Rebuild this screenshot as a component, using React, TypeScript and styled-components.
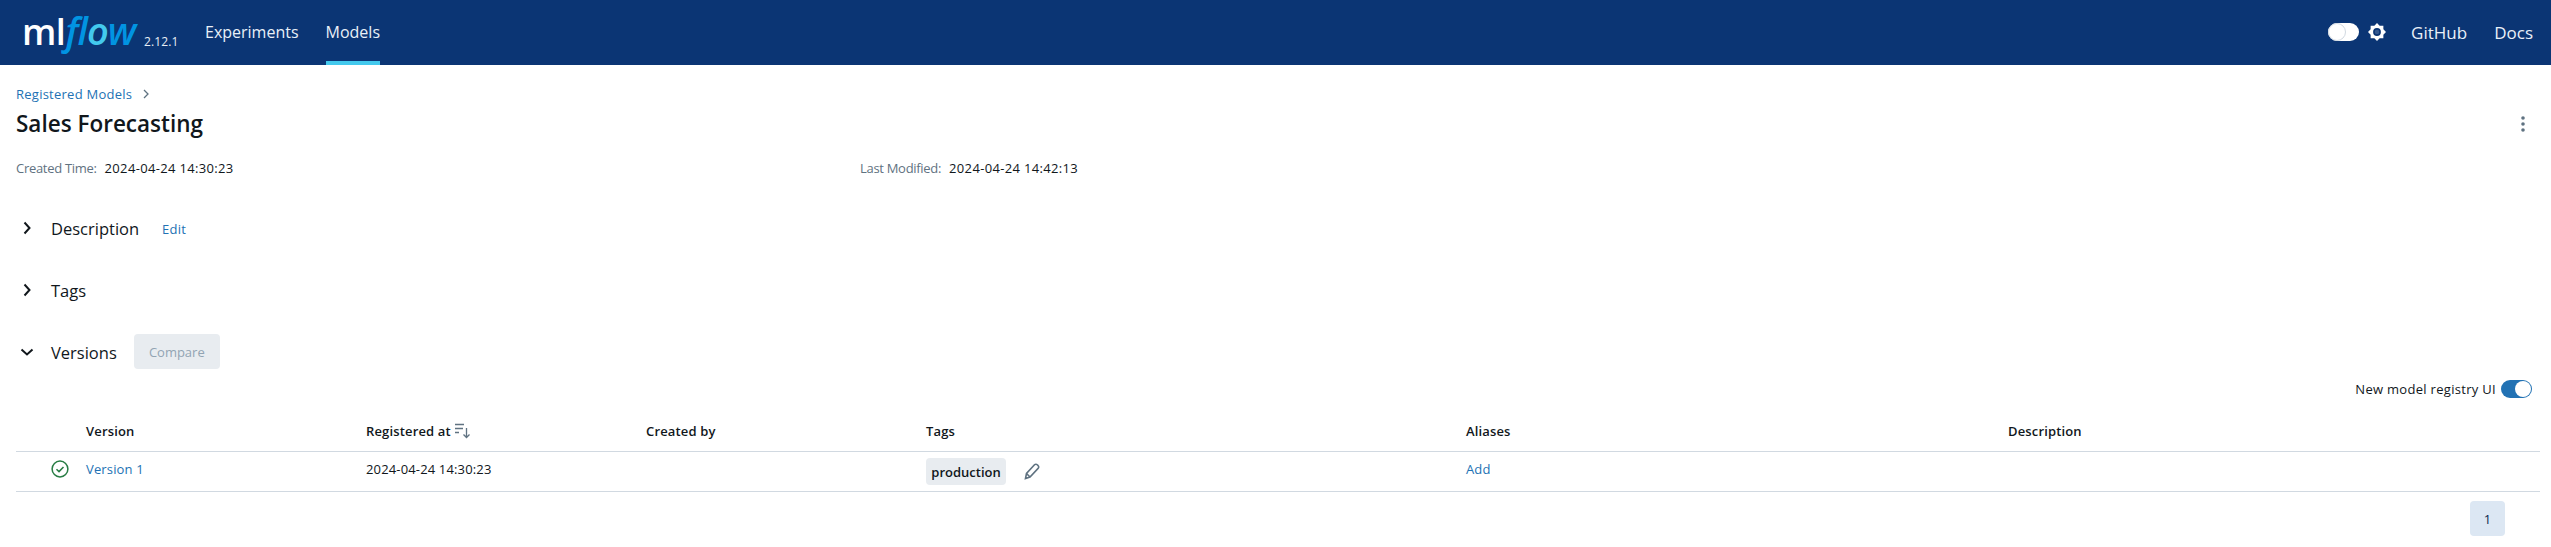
import React from "react";
import styled, { createGlobalStyle } from "styled-components";

const Global = createGlobalStyle`
  html, body { margin: 0; padding: 0; background: #fff; overflow: hidden; }
  body { font-family: "Open Sans", "Noto Sans", sans-serif; color: #11171c; }
  * { box-sizing: border-box; }
`;

const Page = styled.div`width: 2551px; height: 547px; overflow: hidden;`;
const Header = styled.header`
  height: 65px; background: #0b3574; display: flex; align-items: stretch; padding: 0 18px 0 22px;
`;
const Logo = styled.div`
  width: 122px; height: 65px; display: flex; align-items: baseline; padding-top: 4px; line-height: 52px;
`;
const LogoMl = styled.span`font-size: 36px; font-weight: 600; color: #fff; letter-spacing: -0.5px;`;
const LogoFlow = styled.span`
  font-size: 38px; font-weight: 600; font-style: italic; color: #0194e2; letter-spacing: -1px;
`;
const LogoO = styled.span`color: #43c9ed;`;
const LogoVersion = styled.span`
  font-size: 12px; letter-spacing: 0.1px; color: #e8eef5; width: 36px; align-self: flex-start; padding-top: 33px; white-space: nowrap;
`;
const NavLink = styled.a<{ $active?: boolean }>`
  display: flex; align-items: center; height: 65px; padding-bottom: 1px; font-size: 16px; color: #e9f0f8;
  margin-left: ${(p) => (p.$active ? "27px" : "25px")};
  ${(p) => p.$active && `box-shadow: inset 0 -4px 0 #43c9ed;`}
`;
const Spacer = styled.div`flex: 1;`;
const ThemeToggle = styled.div`
  align-self: center; width: 31px; height: 18px; border-radius: 9px; background: #fff; display: flex; margin-top: -1px;
  justify-content: flex-start;
`;
const ThemeThumb = styled.div`
  width: 18px; height: 18px; border-radius: 50%; background: #fff; border: 1px solid #d1d9e1;
`;
const SunWrap = styled.div`align-self: center; display: flex; margin: -1px 0 0 9px;`;
const HeaderLink = styled.a<{ $gap: number }>`
  display: flex; align-items: center; font-size: 17px; color: #e9f0f8; margin-left: ${(p) => p.$gap}px; padding-bottom: 1px;
`;

const Content = styled.main`padding: 0 11px 0 16px;`;
const Breadcrumb = styled.div`
  display: flex; align-items: center; height: 18px; margin-top: 20px; font-size: 13px; letter-spacing: 0.25px; color: #2272b4;
`;
const Crumb = styled.span`margin-right: 10px;`;
const TitleRow = styled.div`display: flex; justify-content: space-between; align-items: center; height: 40px; margin-top: 1px;`;
const Title = styled.h1`margin: 0; font-size: 22.5px; font-weight: 600; color: #11171c; line-height: 40px;`;
const MoreBtn = styled.div`display: flex; margin-right: 13px;`;
const Meta = styled.div`display: flex; height: 20px; margin-top: 14px; align-items: center;`;
const MetaItem = styled.div`width: 844px; display: flex; font-size: 13px;`;
const MetaLabel = styled.span`color: #5f7281; letter-spacing: -0.3px; margin-right: 8px;`;
const MetaValue = styled.span`color: #11171c; letter-spacing: 0.33px;`;

const Section = styled.div<{ $top: number }>`
  display: flex; align-items: center; height: 36px; margin-top: ${(p) => p.$top}px;
`;
const ChevronBox = styled.div`width: 35px; display: flex; padding-left: 3px;`;
const SectionTitle = styled.span`font-size: 16.5px; color: #11171c;`;
const EditLink = styled.span`font-size: 13px; letter-spacing: 0.2px; color: #2272b4; margin-left: 23px; padding-top: 2px;`;
const CompareBtn = styled.button`
  height: 35px; width: 86px; margin-left: 17px; border: 0; border-radius: 4px; background: #e8ecf0; color: #92a4b3;
  font: 13px "Open Sans", sans-serif; margin-top: -1px; padding: 0;
`;
const ToggleRow = styled.div`
  display: flex; justify-content: flex-end; align-items: center; gap: 5px; height: 18px; margin-top: 10px; font-size: 13px; letter-spacing: 0.3px; color: #11171c;
  padding-right: 8px;
`;
const Switch = styled.div`
  width: 31px; height: 18px; border-radius: 9px; background: #2272b4; display: flex; justify-content: flex-end; align-items: center; padding-right: 1px;
`;
const Knob = styled.div`width: 16px; height: 16px; border-radius: 50%; background: #fff;`;

const Table = styled.div`margin-top: 7px;`;
const Row = styled.div<{ $h: number; $pad?: number }>`
  display: grid; grid-template-columns: 70px 280px 280px 280px 540px 542px 1fr; height: ${(p) => p.$h}px;
  padding-top: ${(p) => p.$pad ?? 0}px;
  border-bottom: 1px solid #d1d9e1; align-items: center; font-size: 13px; letter-spacing: 0.15px;
`;
const HeadCell = styled.div`font-weight: 600; color: #11171c; display: flex; align-items: center; gap: 4px;`;
const Cell = styled.div<{ $up?: number }>`display: flex; align-items: center; color: #11171c; margin-top: ${(p) => -(p.$up ?? 0)}px;`;
const StatusCell = styled.div`padding-left: 35px; display: flex; margin-top: -6px;`;
const LinkText = styled.span`color: #2272b4;`;
const Tag = styled.span`
  height: 27px; width: 80px; background: #e8ecf0; border-radius: 4px; display: flex; align-items: center; justify-content: center;
  font-size: 13px; letter-spacing: 0; font-weight: 600; color: #11171c; white-space: nowrap;
`;
const PencilWrap = styled.span`display: flex; margin-left: 18px;`;
const Pager = styled.div`display: flex; justify-content: flex-end; padding: 9px 35px 0 0;`;
const PageBtn = styled.div`
  width: 35px; height: 35px; background: #dce7f3; border-radius: 4px; display: flex; align-items: center; justify-content: center;
  font-size: 13px; color: #0e2a4d;
`;

const Chevron = ({ down }: { down?: boolean }) => (
  <svg width="16" height="16" viewBox="0 0 16 16" fill="none" stroke="#11171c" strokeWidth="2">
    {down ? <path d="M2.5 5.5 8 10.5l5.5-5" /> : <path d="M5.5 2.5 10.5 8l-5 5.5" />}
  </svg>
);

const sunPoints = Array.from({ length: 16 }, (_, i) => {
  const r = i % 2 === 0 ? 9 : 6.9;
  const a = (i * Math.PI) / 8 - Math.PI / 2;
  return `${(9 + r * Math.cos(a)).toFixed(2)},${(9 + r * Math.sin(a)).toFixed(2)}`;
}).join(" ");

const Sun = () => (
  <svg width="18" height="18" viewBox="0 0 18 18">
    <polygon fill="#fff" points={sunPoints} />
    <circle cx="9" cy="9" r="3.1" fill="#35598f" stroke="#0b3574" strokeWidth="1.6" />
  </svg>
);

const Dots = () => (
  <svg width="8" height="16" viewBox="0 0 8 16" fill="#5f7281">
    <circle cx="4" cy="2" r="1.8" />
    <circle cx="4" cy="8" r="1.8" />
    <circle cx="4" cy="14" r="1.8" />
  </svg>
);

const SortIcon = () => (
  <svg width="16" height="16" viewBox="0 0 16 16" fill="none" stroke="#5f7281" strokeWidth="1.3">
    <path d="M0 1.5h9M0 5.5h8M0 9.5h4" />
    <path d="M11.5 5v9.5M8.5 11.5l3 3 3-3" />
  </svg>
);

const CheckCircle = () => (
  <svg width="18" height="18" viewBox="0 0 18 18" fill="none" stroke="#277c43" strokeWidth="1.5">
    <circle cx="9" cy="9" r="7.9" />
    <path d="M5.5 9.3 8 11.6l4.5-4.6" />
  </svg>
);

const Pencil = () => (
  <svg width="16" height="17" viewBox="0 0 16 17" fill="none" stroke="#5f7281" strokeWidth="1.6">
    <path d="M1.5 15.5 2.5 10.5 10.5 1.8a1.9 1.9 0 0 1 2.8 0l.8.8a1.9 1.9 0 0 1 0 2.8L6 14z" />
    <path d="M2.5 10.5 6 14" />
  </svg>
);

export default function App() {
  return (
    <Page>
      <Global />
      <Header>
        <Logo>
          <LogoMl>ml</LogoMl>
          <LogoFlow>fl<LogoO>o</LogoO>w</LogoFlow>
        </Logo>
        <LogoVersion>2.12.1</LogoVersion>
        <NavLink>Experiments</NavLink>
        <NavLink $active>Models</NavLink>
        <Spacer />
        <ThemeToggle><ThemeThumb /></ThemeToggle>
        <SunWrap><Sun /></SunWrap>
        <HeaderLink $gap={25}>GitHub</HeaderLink>
        <HeaderLink $gap={27}>Docs</HeaderLink>
      </Header>
      <Content>
        <Breadcrumb>
          <Crumb>Registered Models</Crumb>
          <svg width="8" height="10" viewBox="0 0 8 10" fill="none" stroke="#5f7281" strokeWidth="1.3">
            <path d="M2 1l4 4-4 4" />
          </svg>
        </Breadcrumb>
        <TitleRow>
          <Title>Sales Forecasting</Title>
          <MoreBtn><Dots /></MoreBtn>
        </TitleRow>
        <Meta>
          <MetaItem><MetaLabel>Created Time:</MetaLabel><MetaValue>2024-04-24 14:30:23</MetaValue></MetaItem>
          <MetaItem><MetaLabel>Last Modified:</MetaLabel><MetaValue>2024-04-24 14:42:13</MetaValue></MetaItem>
        </Meta>
        <Section $top={32}>
          <ChevronBox><Chevron /></ChevronBox>
          <SectionTitle>Description</SectionTitle>
          <EditLink>Edit</EditLink>
        </Section>
        <Section $top={26}>
          <ChevronBox><Chevron /></ChevronBox>
          <SectionTitle>Tags</SectionTitle>
        </Section>
        <Section $top={26}>
          <ChevronBox><Chevron down /></ChevronBox>
          <SectionTitle>Versions</SectionTitle>
          <CompareBtn disabled>Compare</CompareBtn>
        </Section>
        <ToggleRow>
          New model registry UI
          <Switch><Knob /></Switch>
        </ToggleRow>
        <Table>
          <Row $h={47} $pad={5}>
            <div />
            <HeadCell>Version</HeadCell>
            <HeadCell>Registered at <SortIcon /></HeadCell>
            <HeadCell>Created by</HeadCell>
            <HeadCell>Tags</HeadCell>
            <HeadCell>Aliases</HeadCell>
            <HeadCell>Description</HeadCell>
          </Row>
          <Row $h={40}>
            <StatusCell><CheckCircle /></StatusCell>
            <Cell $up={6}><LinkText>Version 1</LinkText></Cell>
            <Cell $up={6}>2024-04-24 14:30:23</Cell>
            <Cell />
            <Cell><Tag>production</Tag><PencilWrap><Pencil /></PencilWrap></Cell>
            <Cell $up={6}><LinkText>Add</LinkText></Cell>
            <Cell />
          </Row>
        </Table>
        <Pager><PageBtn>1</PageBtn></Pager>
      </Content>
    </Page>
  );
}
